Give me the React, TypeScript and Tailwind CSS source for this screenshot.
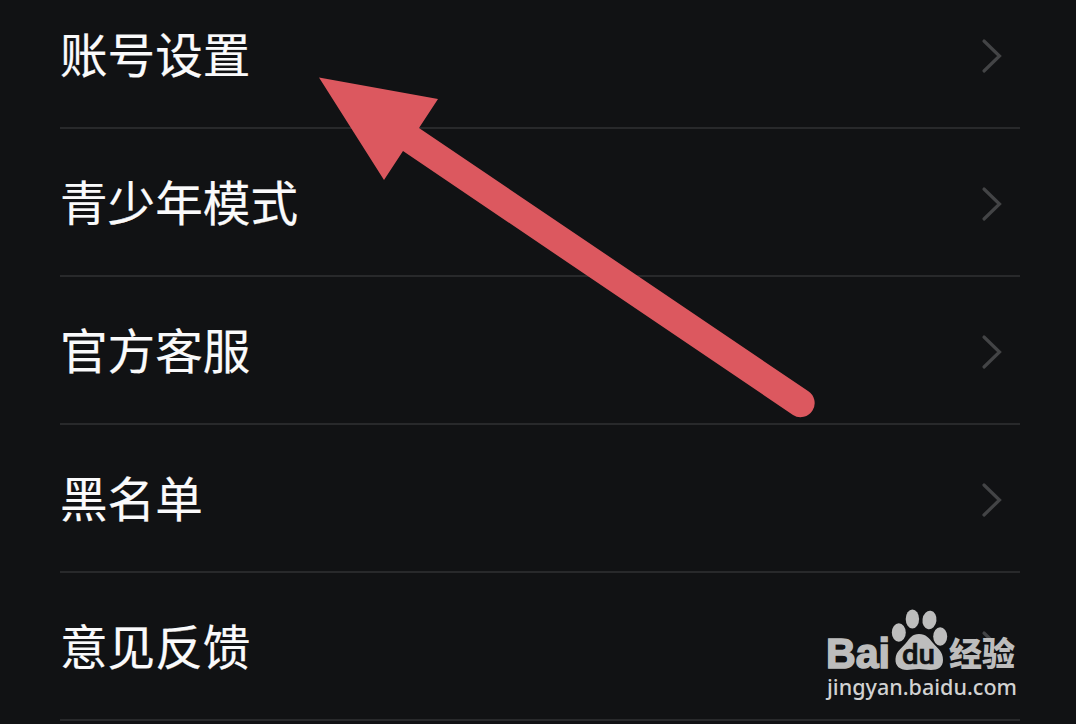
import React from 'react';

const items = ['账号设置', '青少年模式', '官方客服', '黑名单', '意见反馈'];

const Chevron = () => (
  <svg className="mr-[17px] h-9 w-6 shrink-0" viewBox="0 0 24 36" fill="none">
    <path d="M5 3 L20.5 18 L5 33" stroke="#434446" strokeWidth="3.2" strokeLinecap="round" />
  </svg>
);

const SettingRow = ({ label }: { label: string }) => (
  <li className="flex h-[148px] items-center justify-between border-b-2 border-[#28292b] pt-[3px]">
    <span className="pb-[5px] text-[47.6px] leading-none text-[#fafafb] [-webkit-text-stroke:0.2px_#fafafb]">
      {label}
    </span>
    <Chevron />
  </li>
);

const Arrow = () => (
  <svg className="absolute left-0 top-0" width="1076" height="724" viewBox="0 0 1076 724">
    <path
      d="M319 77.5 L438 99 L419 128 L808 391 A14 14 0 0 1 793 415 L403 151 L384 180 Z"
      fill="#dc585f"
    />
  </svg>
);

const Watermark = () => (
  <svg className="absolute left-[810px] top-[600px]" width="230" height="124" viewBox="810 600 230 124">
    {/* hides the row chevron behind the logo, except for its top end */}
    <path d="M978 638 H1008 V672 H978 Z" fill="#111214" />
    <g fill="#bdbdbd">
      <text x="826" y="667.5" fontSize="42" fontWeight="700" textLength="64" lengthAdjust="spacingAndGlyphs" stroke="#bdbdbd" strokeWidth="1.6" fontFamily="'Liberation Sans', Arial, sans-serif">
        Bai
      </text>
      {/* paw */}
      <ellipse cx="898.8" cy="632.5" rx="7" ry="9.2" />
      <ellipse cx="912.4" cy="619" rx="6.7" ry="9.6" />
      <ellipse cx="929.5" cy="620" rx="7" ry="9.3" transform="rotate(8 929.5 620)" />
      <ellipse cx="940.2" cy="636.5" rx="7" ry="9.2" />
      <path d="M919 634 C926 634 929 638 933 643 C937 648 943 651 943 660 C943 667 938 670 931 670 C926 670 923 669 919 669 C914 669 911 670 907 670 C900 670 895 666 895.5 659 C896 651 902 648 906 643 C910 638 912 634 919 634 Z" />
      <text x="949" y="665.5" fontSize="33" fontWeight="900" fontFamily="'Noto Sans CJK SC', sans-serif">
        经验
      </text>
    </g>
    <text x="902" y="664" fontSize="27" fontWeight="500" fill="#111214" stroke="#111214" strokeWidth="0.6" textLength="33" lengthAdjust="spacingAndGlyphs" fontFamily="Roboto, sans-serif">
      du
    </text>
    <text x="827" y="694.5" fontSize="22.5" fontWeight="500" fill="#d2d2d2" textLength="190" lengthAdjust="spacingAndGlyphs" fontFamily="'Noto Sans', sans-serif">
      jingyan.baidu.com
    </text>
  </svg>
);

const App = () => {
  return (
    <main className="relative h-[724px] w-[1076px] overflow-hidden bg-[#111214] font-['Noto_Sans_CJK_SC',sans-serif]">
      <ul className="-mt-[19px] ml-[60px] w-[960px]">
        {items.map((label) => (
          <SettingRow key={label} label={label} />
        ))}
      </ul>
      <Arrow />
      <Watermark />
    </main>
  );
};

export default App;
